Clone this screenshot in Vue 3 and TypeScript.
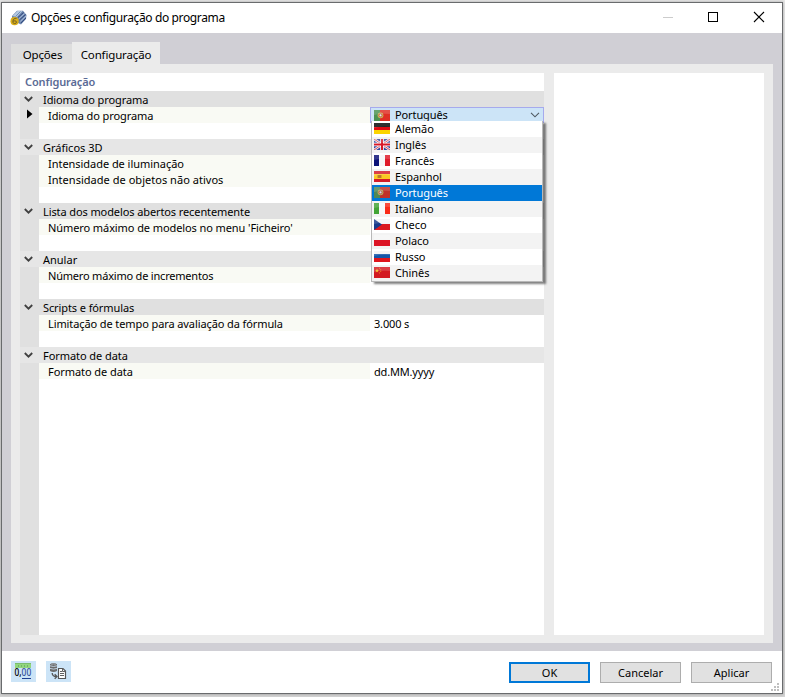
<script setup lang="ts">
import { ref } from 'vue'

/* `ls` is the letter spacing in pixels that a label is set with */
interface Item { label: string; value?: string; ls?: number }
interface Group { title: string; ls?: number; items: Item[] }

const groups: Group[] = [
  { title: 'Idioma do programa', ls: -0.1, items: [{ label: 'Idioma do programa', ls: -0.1 }] },
  { title: 'Gráficos 3D', ls: 0, items: [{ label: 'Intensidade de iluminação', ls: -0.04 }, { label: 'Intensidade de objetos não ativos', ls: 0.03 }] },
  { title: 'Lista dos modelos abertos recentemente', ls: -0.1, items: [{ label: "Número máximo de modelos no menu 'Ficheiro'", ls: -0.09 }] },
  { title: 'Anular', ls: 0, items: [{ label: 'Número máximo de incrementos', ls: -0.2 }] },
  { title: 'Scripts e fórmulas', ls: -0.1, items: [{ label: 'Limitação de tempo para avaliação da fórmula', ls: -0.1, value: '3.000 s' }] },
  { title: 'Formato de data', ls: -0.06, items: [{ label: 'Formato de data', ls: -0.06, value: 'dd.MM.yyyy' }] },
]

/* Each flag is a list of rectangles: x, y, width, height, colour */
type Band = [number, number, number, number, string]
interface Language { name: string; code: string; bands: Band[] }

const portugal: Band[] = [[0, 0, 16, 11, '#df2f25'], [0, 0, 6, 11, '#4c9254']]
const languages: Language[] = [
  { name: 'Alemão', code: 'de', bands: [[0, 0, 16, 4, '#080808'], [0, 4, 16, 3, '#df0b12'], [0, 7, 16, 4, '#fbd400']] },
  { name: 'Inglês', code: 'gb', bands: [[0, 0, 16, 11, '#35469c']] },
  { name: 'Francês', code: 'fr', bands: [[0, 0, 16, 11, '#f6f6f8'], [0, 0, 5, 11, '#0c1278'], [11, 0, 5, 11, '#df1c2c']] },
  { name: 'Espanhol', code: 'es', bands: [[0, 0, 16, 11, '#d51b27'], [0, 3, 16, 5, '#fac923']] },
  { name: 'Português', code: 'pt', bands: portugal },
  { name: 'Italiano', code: 'it', bands: [[0, 0, 16, 11, '#f8f8f8'], [0, 0, 5, 11, '#43a436'], [11, 0, 5, 11, '#fa2b18']] },
  { name: 'Checo', code: 'cz', bands: [[0, 0, 16, 6, '#f3f3f6'], [0, 5, 16, 6, '#db1820']] },
  { name: 'Polaco', code: 'pl', bands: [[0, 0, 16, 5, '#f5f5f5'], [0, 5, 16, 6, '#dc1425']] },
  { name: 'Russo', code: 'ru', bands: [[0, 0, 16, 4, '#f3f3f5'], [0, 3, 16, 4, '#1456a8'], [0, 7, 16, 4, '#df151c']] },
  { name: 'Chinês', code: 'cn', bands: [[0, 0, 16, 11, '#d31a22']] },
]
const current = ref<Language>(languages[4])
</script>

<template>
  <div class="desktop">
    <div class="window">
      <header class="titlebar">
        <svg class="app-icon" width="17" height="16" viewBox="0 0 17 16">
          <path d="M2 6 L7 .8 L13 .8 L16.5 5 L16 9 L11 14.5 L8 13 L2 10Z" fill="#6b84ad" />
          <path d="M2.5 6 L7.5 1 L12.5 1 L7 7Z" fill="#b4c9e2" />
          <path d="M5.5 6.5 L10.5 1.5" stroke="#6f8bb7" />
          <path d="M8 7.5 L13.5 2.5 M9.5 10 L15.5 4.5 M11 13 L16 8" stroke="#334c80" stroke-width="1" />
          <path d="M8.8 8.8 L14.5 3.6 M10.3 11.4 L16 6" stroke="#a9bddb" stroke-width="1" />
          <circle cx="4.6" cy="11.2" r="4.1" fill="#d9ad18" />
          <path d="M6.6 8.4 H5 Q2.9 8.8 2.9 11.2 V12.2 Q3.2 13.6 4.7 13.6 Q6.5 13.5 6.5 12.1 Q6.4 10.8 4.7 10.8 L3.1 11.2" fill="none" stroke="#695a26" stroke-width=".9" />
        </svg>
        <span class="title">Opções e configuração do programa</span>
        <svg class="controls" width="104" height="12" viewBox="0 0 104 12" shape-rendering="crispEdges">
          <path d="M1 6.5H11" stroke="#ccc" />
          <rect x="46.5" y="1.5" width="9" height="9" fill="none" stroke="#000" />
          <path d="M92 1 L102 11 M102 1 L92 11" stroke="#000" stroke-width="1.1" shape-rendering="auto" />
        </svg>
      </header>

      <main class="body">
        <nav class="tabs">
          <div class="tab">Opções</div>
          <div class="tab active">Configuração</div>
        </nav>
        <div class="page">
          <section class="grid">
            <h1 class="caption">Configuração</h1>
            <div class="tree">
              <template v-for="(g, gi) in groups" :key="g.title">
                <div class="group" :class="{ light: gi % 2 === 1 }">
                  <svg class="chev" width="10" height="7" viewBox="0 0 10 7"><path d="M.8 1 L4.5 4.7 L8.2 1" fill="none" stroke="#404040" stroke-width="1.8" /></svg>
                  <span :style="{ letterSpacing: g.ls + 'px' }">{{ g.title }}</span>
                </div>
                <div v-for="(it, i) in g.items" :key="it.label" class="row">
                  <div class="gutter">
                    <svg v-if="gi === 0 && i === 0" width="6" height="10" viewBox="0 0 6 10"><path d="M0 .5 L5.5 5 L0 9.5Z" /></svg>
                  </div>
                  <div class="label" :style="{ letterSpacing: it.ls + 'px' }">{{ it.label }}</div>
                  <div v-if="gi === 0" class="cell">
                    <div class="combo">
                      <svg class="flag" width="16" height="11" viewBox="0 0 16 11">
                        <rect v-for="(b, k) in current.bands" :key="k" :x="b[0]" :y="b[1]" :width="b[2]" :height="b[3]" :fill="b[4]" />
                        <circle cx="6.5" cy="5.3" r="2.9" fill="#c8b355" /><circle cx="6.5" cy="5.3" r="1.5" fill="#dce6f2" stroke="#c8483e" stroke-width=".8" />
                        <path d="M0 0H16V4Q8 3 0 5Z" fill="#fff" opacity=".16" />
                      </svg>
                      <span>{{ current.name }}</span>
                      <svg class="arrow" width="10" height="6" viewBox="0 0 10 6"><path d="M1 .8 L5 4.8 L9 .8" fill="none" stroke="#505860" stroke-width="1.1" /></svg>
                    </div>
                    <div class="popup">
                      <div v-for="l in languages" :key="l.code" class="option" :class="{ selected: l.code === current.code }">
                        <svg class="flag" width="16" height="11" viewBox="0 0 16 11">
                          <rect v-for="(b, k) in l.bands" :key="k" :x="b[0]" :y="b[1]" :width="b[2]" :height="b[3]" :fill="b[4]" />
                          <g v-if="l.code === 'gb'">
                            <path d="M0 0L16 11M16 0L0 11" stroke="#f3f3f8" stroke-width="2.4" />
                            <path d="M0 0L16 11M16 0L0 11" stroke="#d43846" stroke-width=".9" />
                            <path d="M8 0V11M0 5.5H16" stroke="#fff" stroke-width="3.6" />
                            <path d="M8 0V11M0 5.5H16" stroke="#d81828" stroke-width="2" />
                          </g>
                          <g v-if="l.code === 'es'"><rect x="4" y="4" width="3" height="3" fill="#b97b2a" /><path d="M3.5 4V7M7.5 4V7" stroke="#dfa32a" /></g>
                          <g v-if="l.code === 'pt'"><circle cx="6.5" cy="5.3" r="2.9" fill="#c8b355" /><circle cx="6.5" cy="5.3" r="1.5" fill="#dce6f2" stroke="#c8483e" stroke-width=".8" /></g>
                          <path v-if="l.code === 'cz'" d="M0 0L8 5.5L0 11Z" fill="#183a8c" />
                          <g v-if="l.code === 'cn'" fill="#f6b51e"><path d="M3 1.3L3.6 2.9H5L3.9 3.8L4.3 5.4L3 4.5L1.7 5.4L2.1 3.8L1 2.9H2.4Z" /><path d="M5 .8h1v1h-1zM6.2 2.2h1v1h-1zM6.2 4h1v1h-1zM5 5.4h1v1h-1z" opacity=".65" /></g>
                          <path d="M0 0H16V4Q8 3 0 5Z" fill="#fff" opacity=".16" />
                        </svg>
                        <span>{{ l.name }}</span>
                      </div>
                    </div>
                  </div>
                  <div v-else class="cell value">{{ it.value }}</div>
                </div>
                <div class="row"><div class="gutter"></div></div>
              </template>
              <div class="row rest"><div class="gutter"></div></div>
            </div>
          </section>
          <aside class="side"></aside>
        </div>
      </main>

      <footer class="footer">
        <button class="tool" type="button">
          <svg width="25" height="21" viewBox="0 0 25 21">
            <rect x="4" y="2" width="16" height="5" fill="#92d67d" /><path d="M4 2.5H20" stroke="#7abd6b" />
            <path d="M7.5 4V6M10.5 4V6M13.5 4V6M16.5 4V6" stroke="#71b468" shape-rendering="crispEdges" />
            <text x="3.6" y="15" textLength="7" lengthAdjust="spacingAndGlyphs" class="digits">0,</text>
            <text x="10.6" y="15" textLength="9.6" lengthAdjust="spacingAndGlyphs" class="digits blue">00</text>
            <path d="M11 17.5H20" stroke="#1e3f91" />
          </svg>
        </button>
        <button class="tool" type="button">
          <svg width="25" height="21" viewBox="0 0 25 21">
            <path d="M4 3.2Q7.5 1 11 3.2V10Q7.5 12 4 10Z" fill="#6c6c6c" />
            <path d="M4 4.8Q7.5 6.2 11 4.8M4 7.4Q7.5 8.8 11 7.4" stroke="#c4d6e6" fill="none" stroke-width=".9" />
            <path d="M5.3 3.3Q7.5 2.5 9.7 3.3" stroke="#b5bdc5" fill="none" stroke-width=".8" />
            <path d="M6.2 12Q6.2 15.5 10.5 15.5M8.7 13.2L11 15.5L8.7 17.8" stroke="#555" fill="none" stroke-width="1.3" />
            <path d="M12.5 7.5H17L19.5 10V17.5H12.5Z" fill="#fff" stroke="#555" stroke-width="1.2" />
            <path d="M16.5 7.5V10.5H19.5M14 10.5H16M14 12.5H18M14 14.5H18" fill="none" stroke="#606060" />
          </svg>
        </button>
        <span class="spacer"></span>
        <button class="btn primary" type="button">OK</button>
        <button class="btn" type="button">Cancelar</button>
        <button class="btn" type="button">Aplicar</button>
        <svg class="grip" width="8" height="8" viewBox="0 0 8 8" fill="#bfbfbf" shape-rendering="crispEdges">
          <path d="M6 0h2v2h-2zM3 3h2v2h-2zM6 3h2v2h-2zM0 6h2v2h-2zM3 6h2v2h-2zM6 6h2v2h-2z" />
        </svg>
      </footer>
    </div>
  </div>
</template>

<style>
body { margin: 0; overflow: hidden; }
</style>

<style scoped>
* { box-sizing: border-box; }
.desktop {
  width: 785px; height: 697px; padding: 2px 2px 3px 1px; overflow: hidden;
  background: linear-gradient(#e8e8e8, #d4d4d4);
  font: 11px/16px "Noto Sans", "Open Sans", sans-serif; color: #000;
}
.window { width: 782px; height: 692px; border: 1px solid #696b6d; background: #fff; display: flex; flex-direction: column; box-shadow: 0 0 3px rgba(0, 0, 0, .3); }
.titlebar { height: 30px; flex: none; display: flex; align-items: center; padding: 0 16px 0 8px; background: #fff; }
.app-icon { margin-bottom: 1px; }
.title { margin-left: 4px; font-size: 12px; letter-spacing: -.37px; flex: 1; }
.controls { margin-bottom: 2px; }
.body { height: 618px; flex: none; background: #d0cfd5; padding: 9px 9px 8px; display: flex; flex-direction: column; }
.tabs { height: 22px; flex: none; display: flex; align-items: flex-end; font-size: 11.5px; letter-spacing: -.15px; }
.tab { width: 61px; height: 20px; background: #dedede; text-align: center; line-height: 22px; padding-left: 2px; }
.tab.active { width: 88px; height: 22px; background: #ebebeb; line-height: 26px; padding: 0; }
.page { flex: 1; background: #ebebeb; padding: 9px 9px 8px; display: flex; gap: 10px; }
.grid { width: 524px; background: #fff; display: flex; flex-direction: column; }
.side { flex: 1; background: #fff; }
.caption { height: 18px; flex: none; margin: 0; padding-left: 5px; line-height: 18px; font-size: 11px; letter-spacing: -.12px; font-weight: 600; color: #5b6b96; }
.tree { flex: 1; display: flex; flex-direction: column; }
.group { height: 16px; flex: none; background: #e0e0e0; display: flex; line-height: 17px; white-space: nowrap; }
.group.light { background: #e6e6e6; }
.chev { margin: 5px 9px 0 4px; flex: none; }
.row { height: 16px; flex: none; display: flex; line-height: 17px; }
.row.rest { flex: 1; }
.gutter { width: 19px; background: #e0e0e0; flex: none; }
.gutter svg { display: block; margin: 2px 0 0 7px; }
.label { width: 331px; flex: none; padding-left: 9px; background: #f9faf4; white-space: nowrap; }
.cell { width: 174px; flex: none; position: relative; }
.value { padding-left: 4px; letter-spacing: -.17px; }
.combo { height: 16px; border: 1px solid #a6aaed; background: #cce4f7; display: flex; align-items: center; padding: 0 3px; line-height: 14px; }
.combo span { flex: 1; margin-left: 5px; letter-spacing: -.1px; }
.flag { flex: none; display: block; }
.popup { position: absolute; z-index: 2; left: 1px; top: 14px; width: 172px; border: 1px solid #b8b8b8; border-top: 0; background: #fff; box-shadow: 3px 2px 2px rgba(0, 0, 0, .5); clip-path: inset(0 -8px -8px 0); }
.option { height: 16px; display: flex; align-items: flex-start; padding: 2px 0 0 2px; line-height: 11px; }
.option:nth-child(even) { background: #f3f3f3; }
.option.selected { background: #0078d7; color: #fff; }
.option.selected .flag { filter: saturate(.85) brightness(.95); }
.option span { margin-left: 5px; letter-spacing: -.08px; }
.footer { flex: 1; display: flex; position: relative; padding: 10px 10px 0 9px; }
.tool { width: 25px; height: 21px; padding: 0; border: 0; background: #cce4f7; margin-right: 10px; }
.tool svg { display: block; }
.digits { font: 500 10px "Noto Sans", sans-serif; }
.blue { fill: #35529b; }
.spacer { flex: 1; }
.btn { width: 81px; height: 21px; margin: 1px 0 0 10px; padding: 0; border: 1px solid #adadad; background: #e1e1e1; font: 11px/19px "Noto Sans", sans-serif; color: #000; }
.btn.primary { border: 2px solid #0078d7; line-height: 17px; }
.grip { position: absolute; right: 3px; bottom: 2px; }
</style>
